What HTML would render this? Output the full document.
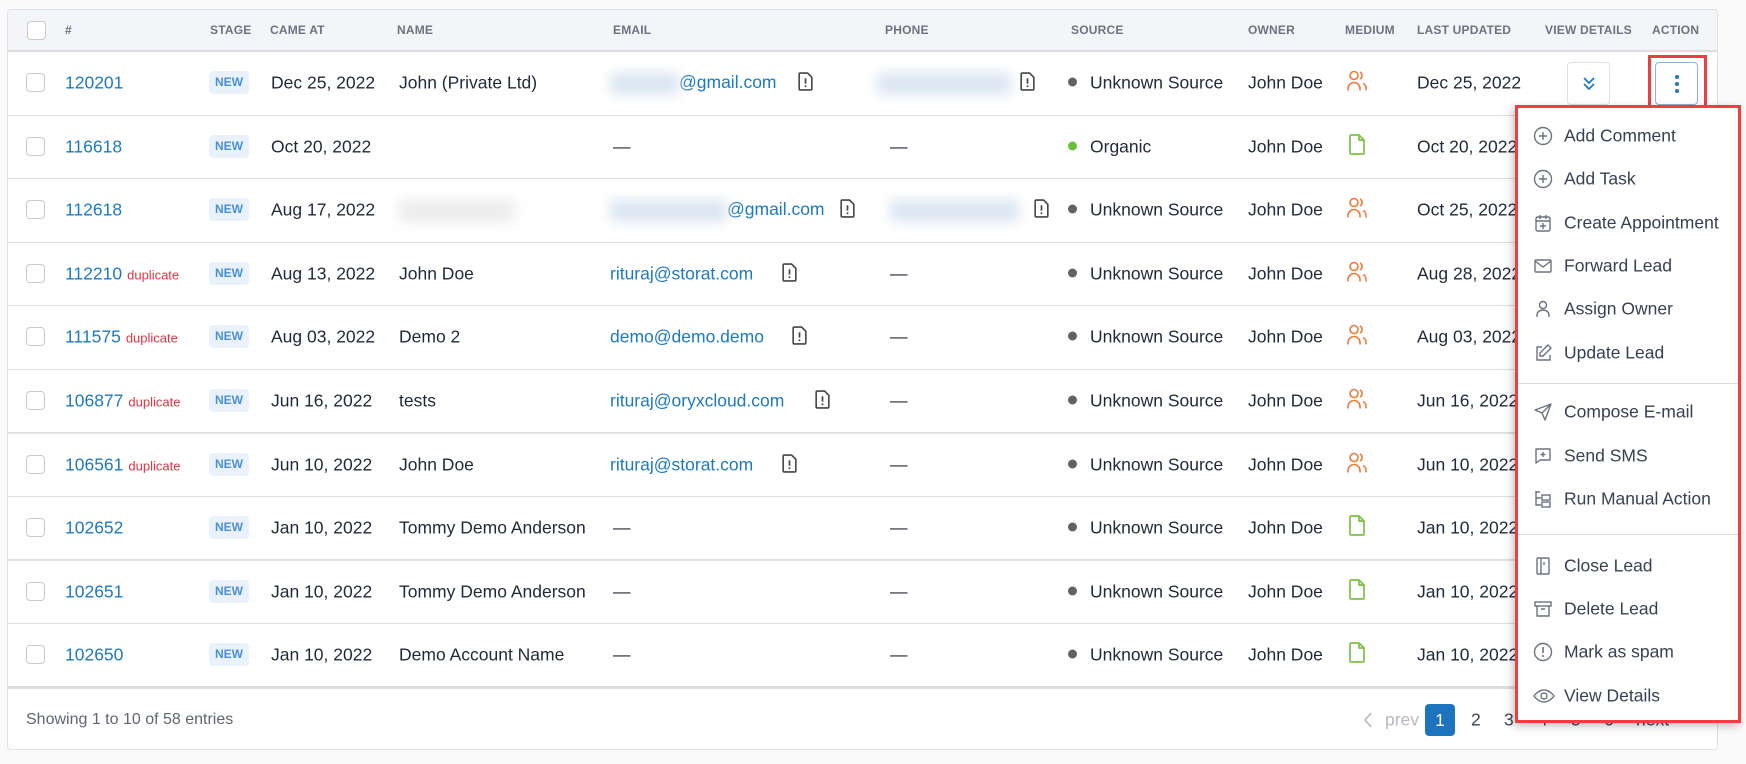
<!DOCTYPE html>
<html><head><meta charset="utf-8">
<style>
*{box-sizing:border-box;margin:0;padding:0}
body{width:1746px;height:764px;background:#fafafa;font-family:"Liberation Sans",sans-serif;position:relative;overflow:hidden;color:#1f2937}
.card{position:absolute;left:7px;top:9px;width:1711px;height:741px;background:#fff;border:1px solid #dfe1e6;border-radius:4px;overflow:hidden}
.hdr{position:absolute;left:0;top:0;width:100%;height:42px;background:#f4f5f8;border-bottom:2px solid #dcdde1}
.h{position:absolute;top:13px;font-size:12px;font-weight:bold;color:#6b7280;letter-spacing:.2px}
.row{position:absolute;left:0;width:100%;height:63.5px;border-bottom:1px solid #dedede}
.c{position:absolute;top:50%;transform:translateY(-50%);font-size:17.5px;white-space:nowrap;color:#1f2937}
.cb{position:absolute;left:19px;top:50%;margin-top:-10px;width:19px;height:19px;border:1px solid #c9cbcf;border-radius:4px;background:#fff}
.id{color:#1d7ac0}
.dup{color:#dc3545;font-size:13px;margin-left:5px}
.badge{position:absolute;left:202px;top:50%;margin-top:-12px;width:40px;height:23px;background:#e9f2fb;border-radius:4px;color:#4a90d9;font-size:12px;font-weight:bold;text-align:center;line-height:23px}
.link{color:#1d7ac0}
.blur{display:inline-block;height:22px;background:#dbe6f1;filter:blur(6px);vertical-align:middle}
.dot{display:inline-block;width:9px;height:9px;border-radius:50%;background:#5f6368;margin-right:13px;vertical-align:middle;position:relative;top:-2px}
.ic{position:absolute;top:50%;transform:translateY(-50%)}
.menu{position:absolute;left:1515px;top:105px;width:226px;height:618px;background:#fff;border:3px solid #ef3e42;box-shadow:-2px 3px 8px rgba(0,0,0,.25);z-index:5}
.mi{position:absolute;left:46px;font-size:17.5px;color:#374151;transform:translateY(-50%)}
.mic{position:absolute;left:15px;transform:translateY(-50%)}
.sep{position:absolute;left:0;width:100%;height:1px;background:#dcdcdc}
.pg{position:absolute;top:720px;transform:translateY(-50%);font-size:17.5px;color:#374151}
</style></head><body>
<div class="card">
 <div class="hdr">
  <div class="cb" style="top:21px"></div>
  <div class="h" style="left:57px">#</div>
  <div class="h" style="left:202px">STAGE</div>
  <div class="h" style="left:262px">CAME AT</div>
  <div class="h" style="left:389px">NAME</div>
  <div class="h" style="left:605px">EMAIL</div>
  <div class="h" style="left:877px">PHONE</div>
  <div class="h" style="left:1063px">SOURCE</div>
  <div class="h" style="left:1240px">OWNER</div>
  <div class="h" style="left:1337px">MEDIUM</div>
  <div class="h" style="left:1409px">LAST UPDATED</div>
  <div class="h" style="left:1537px">VIEW DETAILS</div>
  <div class="h" style="left:1644px">ACTION</div>
 </div>
</div>
<div id="rows" style="position:absolute;left:7px;top:52px;width:1711px;height:635px;overflow:hidden"></div>
<div style="position:absolute;left:8px;top:686px;width:1709px;height:3px;background:#dcdde1"></div>
<div style="position:absolute;left:26px;top:711px;font-size:16px;color:#5f6670">Showing 1 to 10 of 58 entries</div>
<svg style="position:absolute;left:1363px;top:711px" width="10" height="18" viewBox="0 0 10 18"><path d="M8 2L2 9l6 7" fill="none" stroke="#b5b9bf" stroke-width="1.6"/></svg>
<div class="pg" style="left:1385px;color:#b5b9bf">prev</div>
<div style="position:absolute;left:1425px;top:704px;width:30px;height:32px;background:#1c75bc;border-radius:4px;color:#fff;font-size:17.5px;text-align:center;line-height:32px">1</div>
<div class="pg" style="left:1471px">2</div>
<div class="pg" style="left:1504px">3</div>
<div class="pg" style="left:1538px">4</div>
<div class="pg" style="left:1571px">5</div>
<div class="pg" style="left:1604px">6</div>
<div class="pg" style="left:1636px">next</div>

<div style="position:absolute;left:1648px;top:55px;width:59px;height:55px;border:3px solid #ef3e42;z-index:4"></div>

<div class="menu">
 <svg class="mic" style="top:28px" width="20" height="20" viewBox="0 0 20 20"><circle cx="10" cy="10" r="8.5" fill="none" stroke="#6b7280" stroke-width="1.4"/><path d="M10 6v8M6 10h8" stroke="#6b7280" stroke-width="1.4"/></svg>
 <div class="mi" style="top:28px">Add Comment</div>
 <svg class="mic" style="top:71px" width="20" height="20" viewBox="0 0 20 20"><circle cx="10" cy="10" r="8.5" fill="none" stroke="#6b7280" stroke-width="1.4"/><path d="M10 6v8M6 10h8" stroke="#6b7280" stroke-width="1.4"/></svg>
 <div class="mi" style="top:71px">Add Task</div>
 <svg class="mic" style="top:115px" width="20" height="20" viewBox="0 0 20 20"><rect x="3" y="4" width="14" height="14" rx="1.5" fill="none" stroke="#6b7280" stroke-width="1.4"/><path d="M3 8h14M7 2v4M13 2v4M10 10v6M7 13h6" stroke="#6b7280" stroke-width="1.4"/></svg>
 <div class="mi" style="top:115px">Create Appointment</div>
 <svg class="mic" style="top:158px" width="20" height="20" viewBox="0 0 20 20"><rect x="2" y="4" width="16" height="12" rx="1" fill="none" stroke="#6b7280" stroke-width="1.4"/><path d="M2 5l8 6 8-6" fill="none" stroke="#6b7280" stroke-width="1.4"/></svg>
 <div class="mi" style="top:158px">Forward Lead</div>
 <svg class="mic" style="top:201px" width="20" height="20" viewBox="0 0 20 20"><circle cx="10" cy="6" r="3.5" fill="none" stroke="#6b7280" stroke-width="1.4"/><path d="M4 18v-2a6 5 0 0 1 12 0v2" fill="none" stroke="#6b7280" stroke-width="1.4"/></svg>
 <div class="mi" style="top:201px">Assign Owner</div>
 <svg class="mic" style="top:245px" width="20" height="20" viewBox="0 0 20 20"><path d="M9 4H4v13h13v-5" fill="none" stroke="#6b7280" stroke-width="1.4"/><path d="M15 2l3 3-8 8H7v-3z" fill="none" stroke="#6b7280" stroke-width="1.4"/></svg>
 <div class="mi" style="top:245px">Update Lead</div>
 <div class="sep" style="top:275px"></div>
 <svg class="mic" style="top:304px" width="20" height="20" viewBox="0 0 20 20"><path d="M18 2L2 8l7 3 3 7z M18 2L9 11" fill="none" stroke="#6b7280" stroke-width="1.4" stroke-linejoin="round"/></svg>
 <div class="mi" style="top:304px">Compose E-mail</div>
 <svg class="mic" style="top:348px" width="20" height="20" viewBox="0 0 20 20"><path d="M3 3h14v11H7l-4 3z" fill="none" stroke="#6b7280" stroke-width="1.4" stroke-linejoin="round"/><path d="M10 6v5M7.5 8.5h5" stroke="#6b7280" stroke-width="1.4"/></svg>
 <div class="mi" style="top:348px">Send SMS</div>
 <svg class="mic" style="top:391px" width="20" height="20" viewBox="0 0 20 20"><path d="M3 2v14h5M3 9h5M3 3h4" fill="none" stroke="#6b7280" stroke-width="1.4"/><rect x="9" y="6" width="8" height="5" fill="none" stroke="#6b7280" stroke-width="1.4"/><rect x="9" y="13" width="8" height="5" fill="none" stroke="#6b7280" stroke-width="1.4"/></svg>
 <div class="mi" style="top:391px">Run Manual Action</div>
 <div class="sep" style="top:426px"></div>
 <svg class="mic" style="top:458px" width="20" height="20" viewBox="0 0 20 20"><rect x="4" y="2" width="12" height="16" rx="1" fill="none" stroke="#6b7280" stroke-width="1.4"/><path d="M8 2v16M11 6v3" stroke="#6b7280" stroke-width="1.4"/></svg>
 <div class="mi" style="top:458px">Close Lead</div>
 <svg class="mic" style="top:501px" width="20" height="20" viewBox="0 0 20 20"><rect x="2" y="3" width="16" height="4" fill="none" stroke="#6b7280" stroke-width="1.4"/><path d="M4 7v10h12V7M8 10h4" fill="none" stroke="#6b7280" stroke-width="1.4"/></svg>
 <div class="mi" style="top:501px">Delete Lead</div>
 <svg class="mic" style="top:544px" width="20" height="20" viewBox="0 0 20 20"><circle cx="10" cy="10" r="8.5" fill="none" stroke="#6b7280" stroke-width="1.4"/><path d="M10 5v6" stroke="#6b7280" stroke-width="1.6"/><circle cx="10" cy="14" r="1" fill="#6b7280"/></svg>
 <div class="mi" style="top:544px">Mark as spam</div>
 <svg class="mic" style="top:588px" width="22" height="20" viewBox="0 0 22 20"><path d="M1 10s4-6 10-6 10 6 10 6-4 6-10 6S1 10 1 10z" fill="none" stroke="#6b7280" stroke-width="1.4"/><circle cx="11" cy="10" r="3" fill="none" stroke="#6b7280" stroke-width="1.4"/></svg>
 <div class="mi" style="top:588px">View Details</div>
</div>

<script>
var fileI='<svg width="15" height="19" viewBox="0 0 14 18"><path d="M2 1h7l4 4v11a1 1 0 0 1-1 1H2a1 1 0 0 1-1-1V2a1 1 0 0 1 1-1z" fill="none" stroke="#444" stroke-width="1.5"/><path d="M7 6v5" stroke="#444" stroke-width="1.6"/><circle cx="7" cy="13.5" r="0.9" fill="#444"/></svg>';
var ppl='<svg width="20" height="22" viewBox="0 0 20 22"><circle cx="7" cy="6" r="4" fill="none" stroke="#f07a3a" stroke-width="1.6"/><path d="M1 21v-2a6 6 0 0 1 12 0v2" fill="none" stroke="#f07a3a" stroke-width="1.6"/><path d="M13 2.5a4 4 0 0 1 0 7M16 14a5 5 0 0 1 3 5v2" fill="none" stroke="#f07a3a" stroke-width="1.6"/></svg>';
var doc='<svg width="16" height="21" viewBox="0 0 16 21"><path d="M2 1h8l5 5v13a1 1 0 0 1-1 1H2a1 1 0 0 1-1-1V2a1 1 0 0 1 1-1z M10 1v5h5" fill="none" stroke="#7cc143" stroke-width="1.7" stroke-linejoin="round"/></svg>';
var R=[
['120201','','Dec 25, 2022','John (Private Ltd)',[69,'@gmail.com',798],[134,1020],'u','Dec 25, 2022','p'],
['116618','','Oct 20, 2022','',null,null,'o','Oct 20, 2022','d'],
['112618','','Aug 17, 2022','B',[117,'@gmail.com',840],[129,1034],'u','Oct 25, 2022','p'],
['112210','1','Aug 13, 2022','John Doe',[0,'rituraj@storat.com',782],null,'u','Aug 28, 2022','p'],
['111575','1','Aug 03, 2022','Demo 2',[0,'demo@demo.demo',792],null,'u','Aug 03, 2022','p'],
['106877','1','Jun 16, 2022','tests',[0,'rituraj@oryxcloud.com',815],null,'u','Jun 16, 2022','p'],
['106561','1','Jun 10, 2022','John Doe',[0,'rituraj@storat.com',782],null,'u','Jun 10, 2022','p'],
['102652','','Jan 10, 2022','Tommy Demo Anderson',null,null,'u','Jan 10, 2022','d'],
['102651','','Jan 10, 2022','Tommy Demo Anderson',null,null,'u','Jan 10, 2022','d'],
['102650','','Jan 10, 2022','Demo Account Name',null,null,'u','Jan 10, 2022','d']];
var h='';
R.forEach(function(r,i){
 var top=i*63.5;
 h+='<div class="row" style="top:'+top+'px'+(i==6||i==8?';border-top:1px solid #e4e4e4':'')+'">';
 h+='<div class="cb"></div>';
 h+='<div class="c" style="left:58px"><span class="id">'+r[0]+'</span>'+(r[1]?'<span class="dup">duplicate</span>':'')+'</div>';
 h+='<div class="badge">NEW</div>';
 h+='<div class="c" style="left:264px">'+r[2]+'</div>';
 if(r[3]=='B') h+='<div class="c" style="left:392px"><span class="blur" style="width:116px;background:#ececec"></span></div>';
 else if(r[3]) h+='<div class="c" style="left:392px">'+r[3]+'</div>';
 if(r[4]){h+='<div class="c" style="left:603px">'+(r[4][0]?'<span class="blur" style="width:'+r[4][0]+'px"></span>':'')+'<span class="link">'+r[4][1]+'</span></div>';
  h+='<div class="ic" style="left:'+(r[4][2]-7)+'px;margin-top:1px">'+fileI+'</div>';}
 else h+='<div class="c" style="left:606px">—</div>';
 if(r[5]){h+='<div class="c" style="left:'+(r[5][0]==134?870:883)+'px"><span class="blur" style="width:'+r[5][0]+'px"></span></div>';
  h+='<div class="ic" style="left:'+(r[5][1]-7)+'px;margin-top:1px">'+fileI+'</div>';}
 else h+='<div class="c" style="left:883px">—</div>';
 h+='<div class="c" style="left:1061px"><span class="dot"'+(r[6]=='o'?' style="background:#6abf3a"':'')+'></span>'+(r[6]=='o'?'Organic':'Unknown Source')+'</div>';
 h+='<div class="c" style="left:1241px">John Doe</div>';
 h+='<div class="ic" style="left:'+(r[8]=='p'?1340:1342)+'px">'+(r[8]=='p'?ppl:doc)+'</div>';
 h+='<div class="c" style="left:1410px">'+r[7]+'</div>';
 if(i==0){
  h+='<div style="position:absolute;left:1560px;top:10px;width:43px;height:43px;border:1px solid #dfe1e6;border-radius:4px"><svg style="position:absolute;left:13px;top:13px" width="16" height="16" viewBox="0 0 16 16"><path d="M3 2l5 5 5-5M3 8l5 5 5-5" fill="none" stroke="#1d7ac0" stroke-width="1.8"/></svg></div>';
  h+='<div style="position:absolute;left:1648px;top:10px;width:43px;height:43px;border:1px solid #8fb2d6;border-radius:4px"><svg style="position:absolute;left:18px;top:11px" width="6" height="20" viewBox="0 0 6 20"><circle cx="3" cy="3" r="2" fill="#1d7ac0"/><circle cx="3" cy="10" r="2" fill="#1d7ac0"/><circle cx="3" cy="17" r="2" fill="#1d7ac0"/></svg></div>';
 }
 h+='</div>';
});
document.getElementById('rows').innerHTML=h;
</script>
</body></html>
